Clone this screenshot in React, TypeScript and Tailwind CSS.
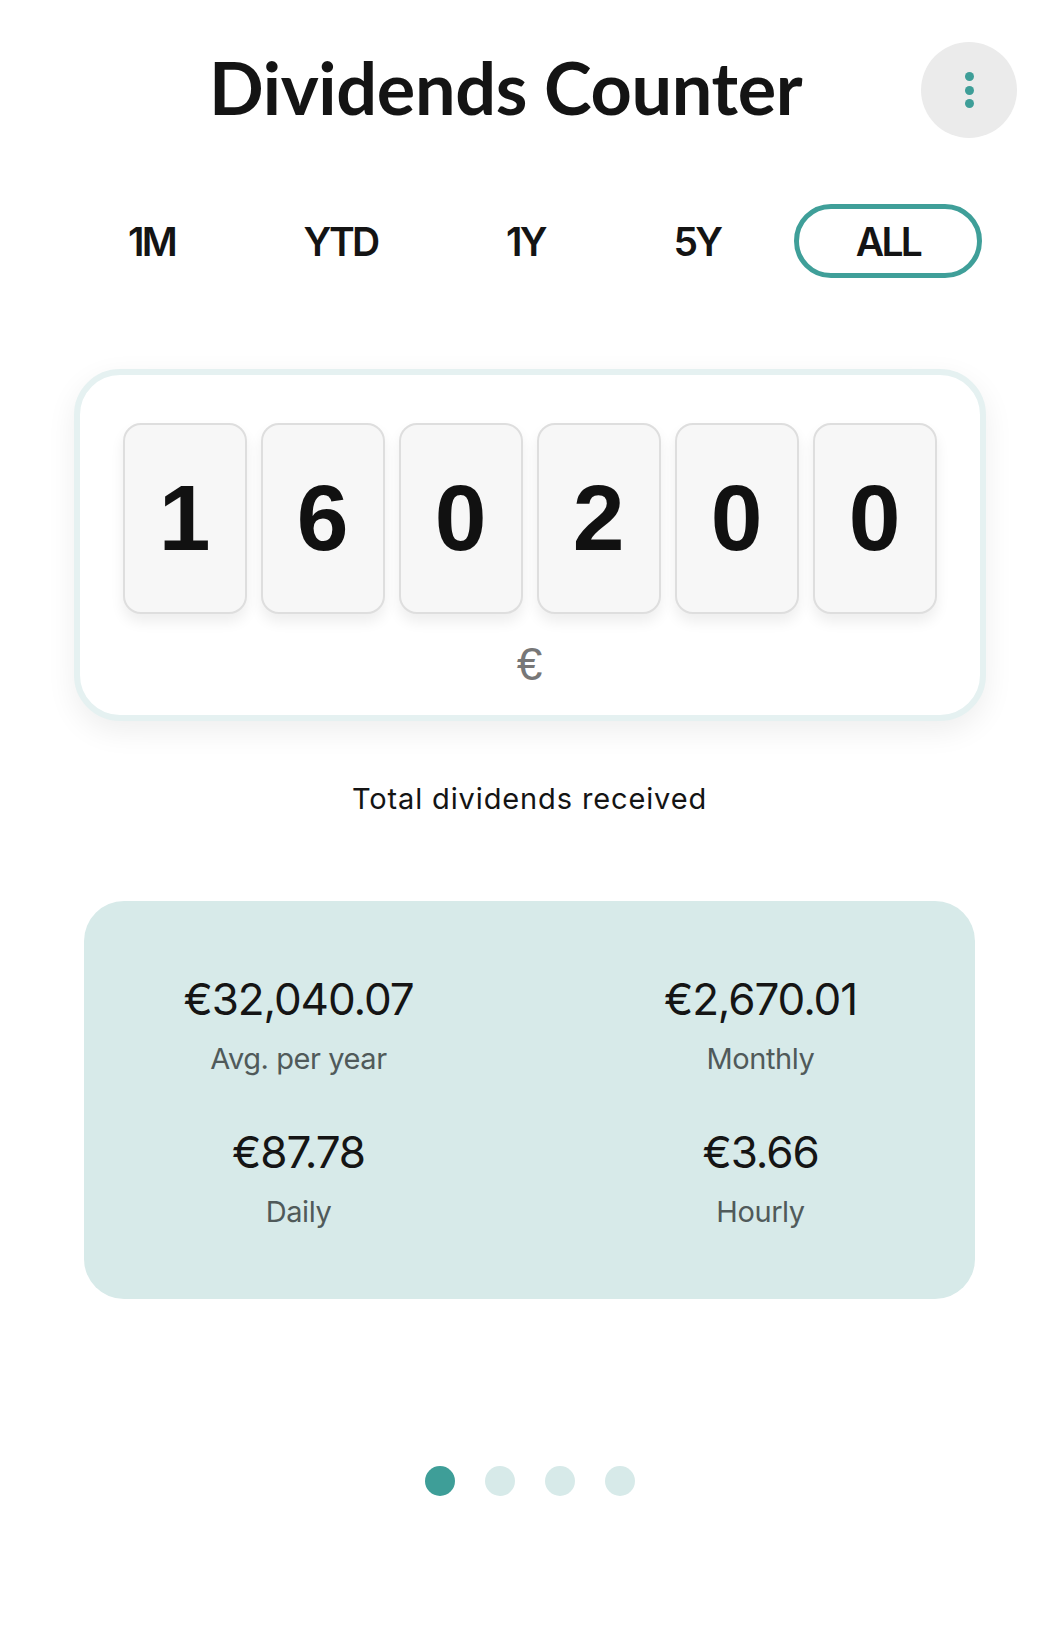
import React from "react";

const digits = ["1", "6", "0", "2", "0", "0"];
const tabs = ["1M", "YTD", "1Y", "5Y", "ALL"];
const stats = [
  { value: "€32,040.07", label: "Avg. per year" },
  { value: "€2,670.01", label: "Monthly" },
  { value: "€87.78", label: "Daily" },
  { value: "€3.66", label: "Hourly" },
];

export default function App() {
  return (
    <div className="w-[1059px] h-[1640px] bg-white overflow-hidden font-['Inter',sans-serif] text-[#141414]">
      {/* Header */}
      <div className="flex items-start pt-[42px] pl-[209px] pr-[42px]">
        <h1 className="mt-[9px] flex-1 font-['Lato',sans-serif] font-bold text-[72px] leading-none tracking-[-0.005em] text-[#141414]">
          Dividends Counter
        </h1>
        <button className="w-[96px] h-[96px] rounded-full bg-[#ebebeb] flex flex-col items-center justify-center gap-[4.5px]">
          <span className="w-[9px] h-[9px] rounded-full bg-[#3e9e98]" />
          <span className="w-[9px] h-[9px] rounded-full bg-[#3e9e98]" />
          <span className="w-[9px] h-[9px] rounded-full bg-[#3e9e98]" />
        </button>
      </div>

      {/* Tabs */}
      <div className="mt-[66px] ml-[73px] flex items-center gap-[18.5px]">
        {tabs.map((t) =>
          t === "ALL" ? (
            <div
              key={t}
              className="h-[74px] px-[57px] rounded-full border-[5px] border-[#3f9f99] flex items-center justify-center font-semibold text-[39px] leading-none tracking-[-0.07em]"
            >
              {t}
            </div>
          ) : (
            <div
              key={t}
              className="h-[74px] px-[55px] flex items-center justify-center font-semibold text-[39px] leading-none tracking-[-0.07em]"
            >
              {t}
            </div>
          )
        )}
      </div>

      {/* Counter card */}
      <div className="mt-[91px] mx-auto w-[912px] rounded-[46px] border-[6px] border-[#e5f1f1] bg-white shadow-[0_10px_30px_rgba(0,0,0,0.07)] pt-[48px] pb-[28px] flex flex-col items-center">
        <div className="flex gap-[14px]">
          {digits.map((d, i) => (
            <div
              key={i}
              className="w-[124px] h-[191px] rounded-[18px] border-2 border-[#dedede] bg-[#f7f7f7] shadow-[0_8px_14px_rgba(0,0,0,0.07)] flex items-center justify-center font-['Liberation_Sans',Arial,sans-serif] font-bold text-[93px] leading-none text-[#111]"
            >
              {d}
            </div>
          ))}
        </div>
        <div className="mt-[27px] font-['Liberation_Sans',Arial,sans-serif] text-[46px] leading-none text-[#777]">
          €
        </div>
      </div>

      <p className="mt-[63px] text-center text-[29px] leading-none tracking-[0.03em] text-[#141414]">
        Total dividends received
      </p>

      {/* Stats card */}
      <div className="mt-[88px] mx-auto w-[891px] h-[398px] rounded-[40px] bg-[#d7eae9] pt-[76px]">
        <div className="grid grid-cols-2 gap-x-[33px] gap-y-[57px]">
          {stats.map((s) => (
            <div key={s.label} className="flex flex-col items-center">
              <div className="text-[44px] leading-none tracking-[-0.025em] text-[#151515]">{s.value}</div>
              <div className="mt-[23px] text-[29px] leading-none tracking-[-0.015em] text-[#505a5a]">{s.label}</div>
            </div>
          ))}
        </div>
      </div>

      {/* Pager dots */}
      <div className="mt-[167px] flex justify-center gap-[30px]">
        <span className="w-[30px] h-[30px] rounded-full bg-[#3e9e98]" />
        <span className="w-[30px] h-[30px] rounded-full bg-[#d7eae9]" />
        <span className="w-[30px] h-[30px] rounded-full bg-[#d7eae9]" />
        <span className="w-[30px] h-[30px] rounded-full bg-[#d7eae9]" />
      </div>
    </div>
  );
}
